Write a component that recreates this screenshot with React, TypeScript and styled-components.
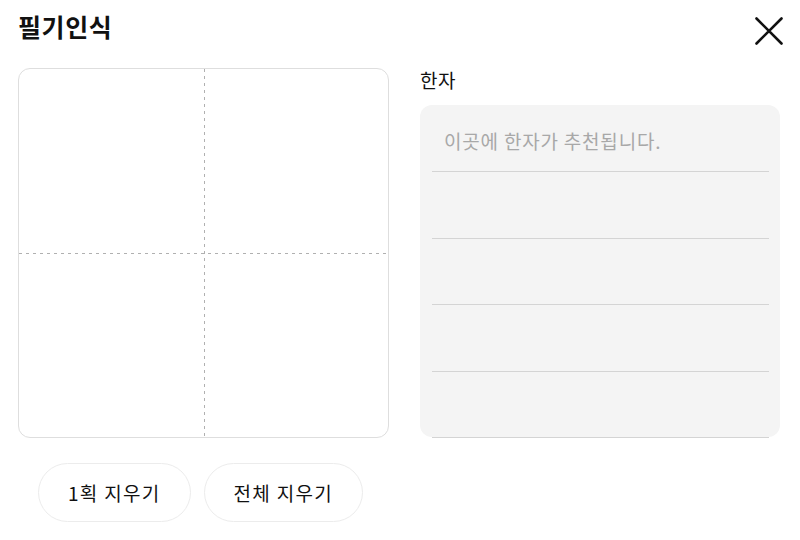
import React from "react";
import styled, { createGlobalStyle } from "styled-components";

const Global = createGlobalStyle`
  html, body { margin: 0; padding: 0; background: #fff; }
  body { font-family: "Noto Sans CJK KR", "Noto Sans", sans-serif; color: #111; }
  * { box-sizing: border-box; }
`;

const Dialog = styled.div`
  width: 800px;
  height: 540px;
  padding: 0 20px 0 18px;
  display: flex;
  flex-direction: column;
  background: #fff;
`;

const Header = styled.div`
  height: 68px;
  display: flex;
  justify-content: space-between;
  align-items: flex-start;
`;

const Title = styled.h1`
  margin: 8px 0 0 0;
  font-size: 25px;
  font-weight: 700;
  line-height: 36px;
  letter-spacing: 0.6px;
  color: #111;
`;

const CloseButton = styled.button`
  margin: 17px -3px 0 0;
  width: 28px;
  height: 28px;
  padding: 0;
  border: none;
  background: none;
  cursor: pointer;
  display: flex;
`;

const Body = styled.div`
  display: flex;
  gap: 31px;
`;

const Canvas = styled.div`
  position: relative;
  width: 371px;
  height: 370px;
  border: 1px solid #dedede;
  border-radius: 12px;
  background: #fff;
`;

const VGuide = styled.div`
  position: absolute;
  top: 0;
  bottom: 0;
  left: 185px;
  width: 1px;
  background: repeating-linear-gradient(to bottom, #b0b0b0 0 3px, transparent 3px 7px);
`;

const HGuide = styled.div`
  position: absolute;
  left: 0;
  right: 0;
  top: 184px;
  height: 1px;
  background: repeating-linear-gradient(to right, #b0b0b0 0 3px, transparent 3px 7px);
`;

const Side = styled.div`
  width: 360px;
  display: flex;
  flex-direction: column;
`;

const Label = styled.div`
  font-size: 19px;
  line-height: 26px;
  letter-spacing: 0.5px;
  margin-top: -1px;
  height: 38px;
  color: #111;
`;

const Candidates = styled.ul`
  margin: 0;
  padding: 0 11px 0 12px;
  list-style: none;
  height: 332px;
  background: #f4f4f4;
  border-radius: 12px;
  display: flex;
  flex-direction: column;
`;

const Row = styled.li`
  flex: 1;
  border-bottom: 1.5px solid #d4d4d4;
  display: flex;
  align-items: center;
  padding: 0 12px;
  margin-bottom: -1px;
`;

const Placeholder = styled.span`
  font-size: 19px;
  letter-spacing: 0.8px;
  color: #a8a8a8;
  margin-top: 4px;
`;

const Actions = styled.div`
  display: flex;
  gap: 13px;
  padding: 25px 0 0 20px;
`;

const PillButton = styled.button`
  height: 59px;
  padding: 0 29px;
  border: 1px solid #ececec;
  border-radius: 30px;
  background: #fff;
  font-family: "Noto Sans CJK KR", "Noto Sans", sans-serif;
  font-size: 19px;
  letter-spacing: 1.3px;
  color: #111;
  cursor: pointer;
`;

export default function App() {
  return (
    <>
      <Global />
      <Dialog>
        <Header>
          <Title>필기인식</Title>
          <CloseButton aria-label="닫기">
            <svg width="28" height="28" viewBox="0 0 28 28">
              <path d="M1.5 1.5 L26.5 26.5 M26.5 1.5 L1.5 26.5" stroke="#111" strokeWidth="2.6" strokeLinecap="round" fill="none" />
            </svg>
          </CloseButton>
        </Header>
        <Body>
          <Canvas>
            <VGuide />
            <HGuide />
          </Canvas>
          <Side>
            <Label>한자</Label>
            <Candidates>
              <Row><Placeholder>이곳에 한자가 추천됩니다.</Placeholder></Row>
              <Row />
              <Row />
              <Row />
              <Row />
            </Candidates>
          </Side>
        </Body>
        <Actions>
          <PillButton>1획 지우기</PillButton>
          <PillButton>전체 지우기</PillButton>
        </Actions>
      </Dialog>
    </>
  );
}
